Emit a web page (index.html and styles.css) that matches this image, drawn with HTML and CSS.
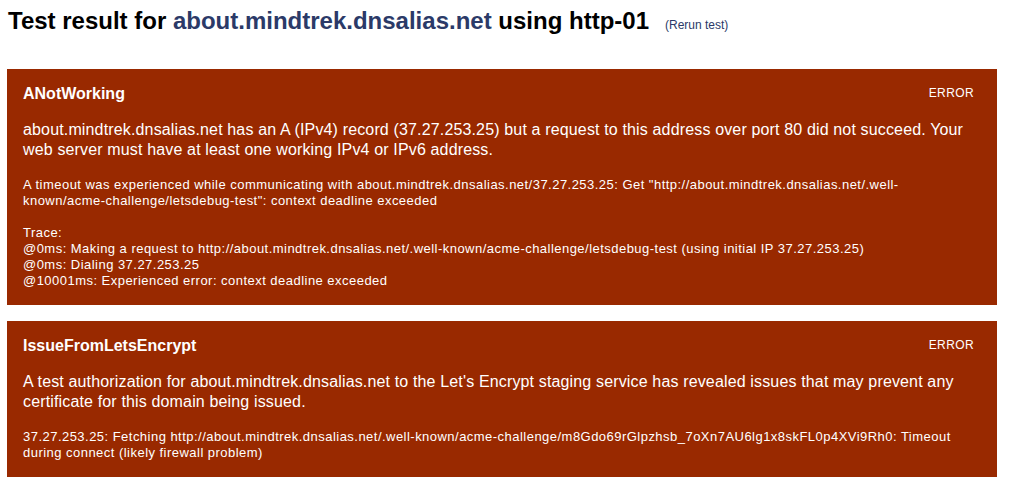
FILE: index.html
```html
<!DOCTYPE html>
<html lang="en">
<head>
<meta charset="utf-8">
<title>Test result for about.mindtrek.dnsalias.net using http-01</title>
<link rel="stylesheet" href="styles.css">
</head>
<body>
<header class="page-header">
  <h1 class="title">Test result for <a class="domain" href="#">about.mindtrek.dnsalias.net</a> using http-01</h1>
  <a class="rerun" href="#">(Rerun test)</a>
</header>
<main class="results">
  <section class="problem">
    <div class="problem-head">
      <h2 class="problem-name">ANotWorking</h2>
      <span class="severity">ERROR</span>
    </div>
    <p class="explanation">about.mindtrek.dnsalias.net has an A (IPv4) record (37.27.253.25) but a request to this address over port 80 did not succeed. Your web server must have at least one working IPv4 or IPv6 address.</p>
    <div class="detail">
      <p>A timeout was experienced while communicating with about.mindtrek.dnsalias.net/37.27.253.25: Get "http://about.mindtrek.dnsalias.net/.well-known/acme-challenge/letsdebug-test": context deadline exceeded</p>
      <p>Trace:<br>@0ms: Making a request to http://about.mindtrek.dnsalias.net/.well-known/acme-challenge/letsdebug-test (using initial IP 37.27.253.25)<br>@0ms: Dialing 37.27.253.25<br>@10001ms: Experienced error: context deadline exceeded</p>
    </div>
  </section>
  <section class="problem">
    <div class="problem-head">
      <h2 class="problem-name">IssueFromLetsEncrypt</h2>
      <span class="severity">ERROR</span>
    </div>
    <p class="explanation">A test authorization for about.mindtrek.dnsalias.net to the Let's Encrypt staging service has revealed issues that may prevent any certificate for this domain being issued.</p>
    <div class="detail">
      <p>37.27.253.25: Fetching http://about.mindtrek.dnsalias.net/.well-known/acme-challenge/m8Gdo69rGlpzhsb_7oXn7AU6lg1x8skFL0p4XVi9Rh0: Timeout during connect (likely firewall problem)</p>
    </div>
  </section>
</main>
</body>
</html>
```

FILE: styles.css
```css
html, body {
  margin: 0;
  padding: 0;
  background: #fff;
}

body {
  font-family: "Liberation Sans", Arial, sans-serif;
  color: #000;
}

.page-header {
  display: flex;
  align-items: baseline;
  gap: 16px;
  padding: 7px 0 0 8px;
}

.title {
  margin: 0;
  font-size: 24px;
  font-weight: bold;
  line-height: normal;
}

.domain {
  color: #2b3a68;
  text-decoration: none;
}

.rerun {
  font-size: 12px;
  color: #2b3a68;
  text-decoration: none;
}

.results {
  display: flex;
  flex-direction: column;
  gap: 16px;
  margin: 34px 12px 0 7px;
}

.problem {
  background: #992900;
  color: #fff;
  padding: 16px;
}

.problem-head {
  display: flex;
  justify-content: space-between;
  align-items: baseline;
}

.problem-name {
  margin: 0;
  font-size: 16px;
  font-weight: bold;
  line-height: normal;
}

.severity {
  font-size: 12px;
  letter-spacing: 0.4px;
  margin-right: 7px;
  position: relative;
  top: -2px;
}

.explanation {
  margin: 17px 0 0 0;
  font-size: 16px;
  line-height: 20px;
  letter-spacing: 0.15px;
}

.detail {
  margin-top: 17px;
  font-size: 13px;
  line-height: 16px;
  letter-spacing: 0.47px;
}

.detail p {
  margin: 0 0 16px 0;
}

.detail p:last-child {
  margin-bottom: 0;
}
```
